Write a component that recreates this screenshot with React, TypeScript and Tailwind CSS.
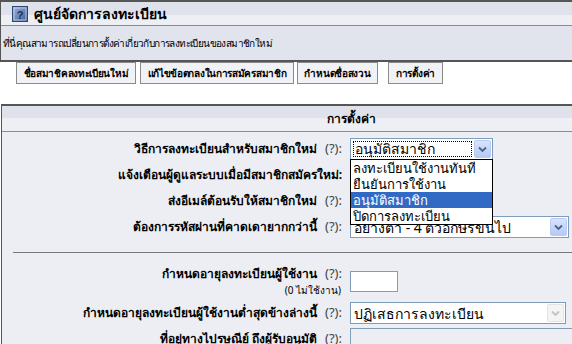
import React from 'react';

const font = "font-['Tahoma','Noto_Sans','DejaVu_Sans',sans-serif]";

function Arrow({ disabled }: { disabled?: boolean }) {
  return (
    <div
      className={
        disabled
          ? 'w-[17px] h-[18px] mr-px rounded-[2px] border border-[#e3e3e3] bg-[#f4f4f4] flex items-center justify-center'
          : 'w-[17px] h-[18px] mr-px rounded-[2px] border border-[#b9cbf5] bg-[linear-gradient(#d8e3fd,#b5c9f8)] flex items-center justify-center'
      }
    >
      <svg width="9" height="7" viewBox="0 0 9 7">
        <path d="M1 1.5 L4.5 5 L8 1.5" fill="none" stroke={disabled ? '#c4c4c4' : '#4d6185'} strokeWidth="1.8" />
      </svg>
    </div>
  );
}

function Help() {
  return <span className="ml-[8px] font-normal text-[#444] text-[13px]">(?):</span>;
}

function Row({ label, help = true, children, h = 'h-[26px]' }: { label: string; help?: boolean; children?: React.ReactNode; h?: string }) {
  return (
    <div className={`flex items-center ${h}`}>
      <div className="w-[340px] text-right font-bold text-[12px] text-black whitespace-nowrap">
        {label}
        {help && <Help />}
      </div>
      <div className="ml-[8px]">{children}</div>
    </div>
  );
}

const options = ['ลงทะเบียนใช้งานทันที', 'ยืนยันการใช้งาน', 'อนุมัติสมาชิก', 'ปิดการลงทะเบียน'];

const tab = 'h-[22px] border border-[#8a8a8a] bg-[#f1f2f6] flex items-center justify-center whitespace-nowrap tracking-[-0.3px]';

export default function App() {
  return (
    <div className={`w-[572px] h-[344px] overflow-hidden bg-white ${font}`}>
      <div className="w-[700px]">
        {/* top panel */}
        <div className="border-t-2 border-l border-[#555] border-b-2">
          <div className="h-[24px] bg-[linear-gradient(#dfe2eb_55%,#edeff4_55%)] border-b border-[#8c8c8c] flex items-center pl-[11px]">
            <svg width="16" height="16" viewBox="0 0 16 16">
              <defs>
                <linearGradient id="ic" x1="0" y1="0" x2="1" y2="1">
                  <stop offset="0" stopColor="#9fb6dc" />
                  <stop offset="1" stopColor="#3d5b93" />
                </linearGradient>
              </defs>
              <rect x="0.5" y="0.5" width="15" height="15" fill="url(#ic)" stroke="#2d4677" />
              <rect x="2" y="2" width="12" height="12" fill="none" stroke="#c9d6ee" strokeWidth="0.8" />
              <text x="8" y="12.5" textAnchor="middle" fontSize="11" fontWeight="bold" fill="#1c2f57" fontFamily="Liberation Sans, sans-serif">?</text>
            </svg>
            <span className="ml-[6px] font-bold text-[14px] text-black">ศูนย์จัดการลงทะเบียน</span>
          </div>
          <div className="h-[34px] bg-[#e1e4ed] flex items-center pl-[2px] text-[10px] tracking-[-0.6px] text-black">
            ที่นี่คุณสามารถเปลี่ยนการตั้งค่าเกี่ยวกับการลงทะเบียนของสมาชิกใหม่
          </div>
        </div>
        <div className="flex pl-[16px] text-[10px] font-bold text-black">
          <div className={`w-[120px] ${tab}`}>ชื่อสมาชิคลงทะเบียนใหม่</div>
          <div className={`ml-[4px] w-[154px] ${tab}`}>แก้ไขข้อตกลงในการสมัครสมาชิก</div>
          <div className={`ml-[3px] w-[81px] ${tab}`}>กำหนดชื่อสงวน</div>
          <div className={`ml-[10px] w-[55px] ${tab}`}>การตั้งค่า</div>
        </div>

        {/* settings panel */}
        <div className="mt-[20px] ml-px border-t-2 border-l border-[#555] bg-[#eceef3] pb-[20px]">
          <div className="h-[26px] bg-[linear-gradient(#dfe2eb_48%,#edeff4_48%)] border-b border-[#8c8c8c] flex items-center justify-center font-bold text-[12px] text-black">
            การตั้งค่า
          </div>
          <div className="pt-[4px]">
            <Row label="วิธีการลงทะเบียนสำหรับสมาชิกใหม่">
              <div className="relative">
                <div className="w-[143px] h-[22px] border border-[#7f9db9] bg-white flex items-center">
                  <div className="flex-1 ml-[2px] mr-[2px] h-[16px] border border-dotted border-black flex items-center text-[14px] leading-none pl-[1px]">อนุมัติสมาชิก</div>
                  <Arrow />
                </div>
                <div className="absolute top-[21px] left-0 w-[143px] border border-black bg-white z-10 text-[13px]">
                  {options.map((o, i) => (
                    <div key={o} className={i === 2 ? 'h-[16px] leading-[16px] px-[2px] bg-[#316ac5] text-white' : 'h-[16px] leading-[16px] px-[2px] text-black'}>
                      {o}
                    </div>
                  ))}
                </div>
              </div>
            </Row>
            <Row label="แจ้งเตือนผู้ดูแลระบบเมื่อมีสมาชิกสมัครใหม่:" help={false} />
            <Row label="ส่งอีเมล์ต้อนรับให้สมาชิกใหม่" />
            <Row label="ต้องการรหัสผ่านที่คาดเดายากกว่านี้">
              <div className="w-[219px] h-[22px] border border-[#7f9db9] bg-white flex items-center">
                <div className="flex-1 pl-[3px] text-[14px] text-black whitespace-nowrap">อย่างต่ำ - 4 ตัวอักษรขึ้นไป</div>
                <Arrow />
              </div>
            </Row>
          </div>
          <div className="mt-[12px] ml-[11px] h-px bg-[#777]" />
          <div className="mt-[10px]">
            <div className="flex items-center h-[36px]">
              <div className="w-[340px] text-right text-black whitespace-nowrap">
                <div className="font-bold text-[12px]">
                  กำหนดอายุลงทะเบียนผู้ใช้งาน
                  <Help />
                </div>
                <div className="text-[10px] pr-[1px]">(0 ไม่ใช้งาน)</div>
              </div>
              <div className="ml-[8px] w-[48px] h-[21px] border border-[#7f9db9] bg-white" />
            </div>
            <Row label="กำหนดอายุลงทะเบียนผู้ใช้งานต่ำสุดข้างล่างนี้" h="h-[26px] mt-[1px]">
              <div className="w-[216px] h-[22px] border border-[#7f9db9] bg-white flex items-center">
                <div className="flex-1 pl-[3px] text-[14px] text-black">ปฏิเสธการลงทะเบียน</div>
                <Arrow disabled />
              </div>
            </Row>
            <div className="flex items-start mt-[2px]">
              <div className="w-[340px] pt-[1px] text-right font-bold text-[12px] text-black whitespace-nowrap">
                ที่อยู่ทางไปรษณีย์ ถึงผู้รับอนุมัติ
                <Help />
              </div>
              <div className="ml-[8px] w-[300px] h-[30px] border border-[#7f9db9] bg-[#eceef3]" />
            </div>
          </div>
        </div>
      </div>
    </div>
  );
}
